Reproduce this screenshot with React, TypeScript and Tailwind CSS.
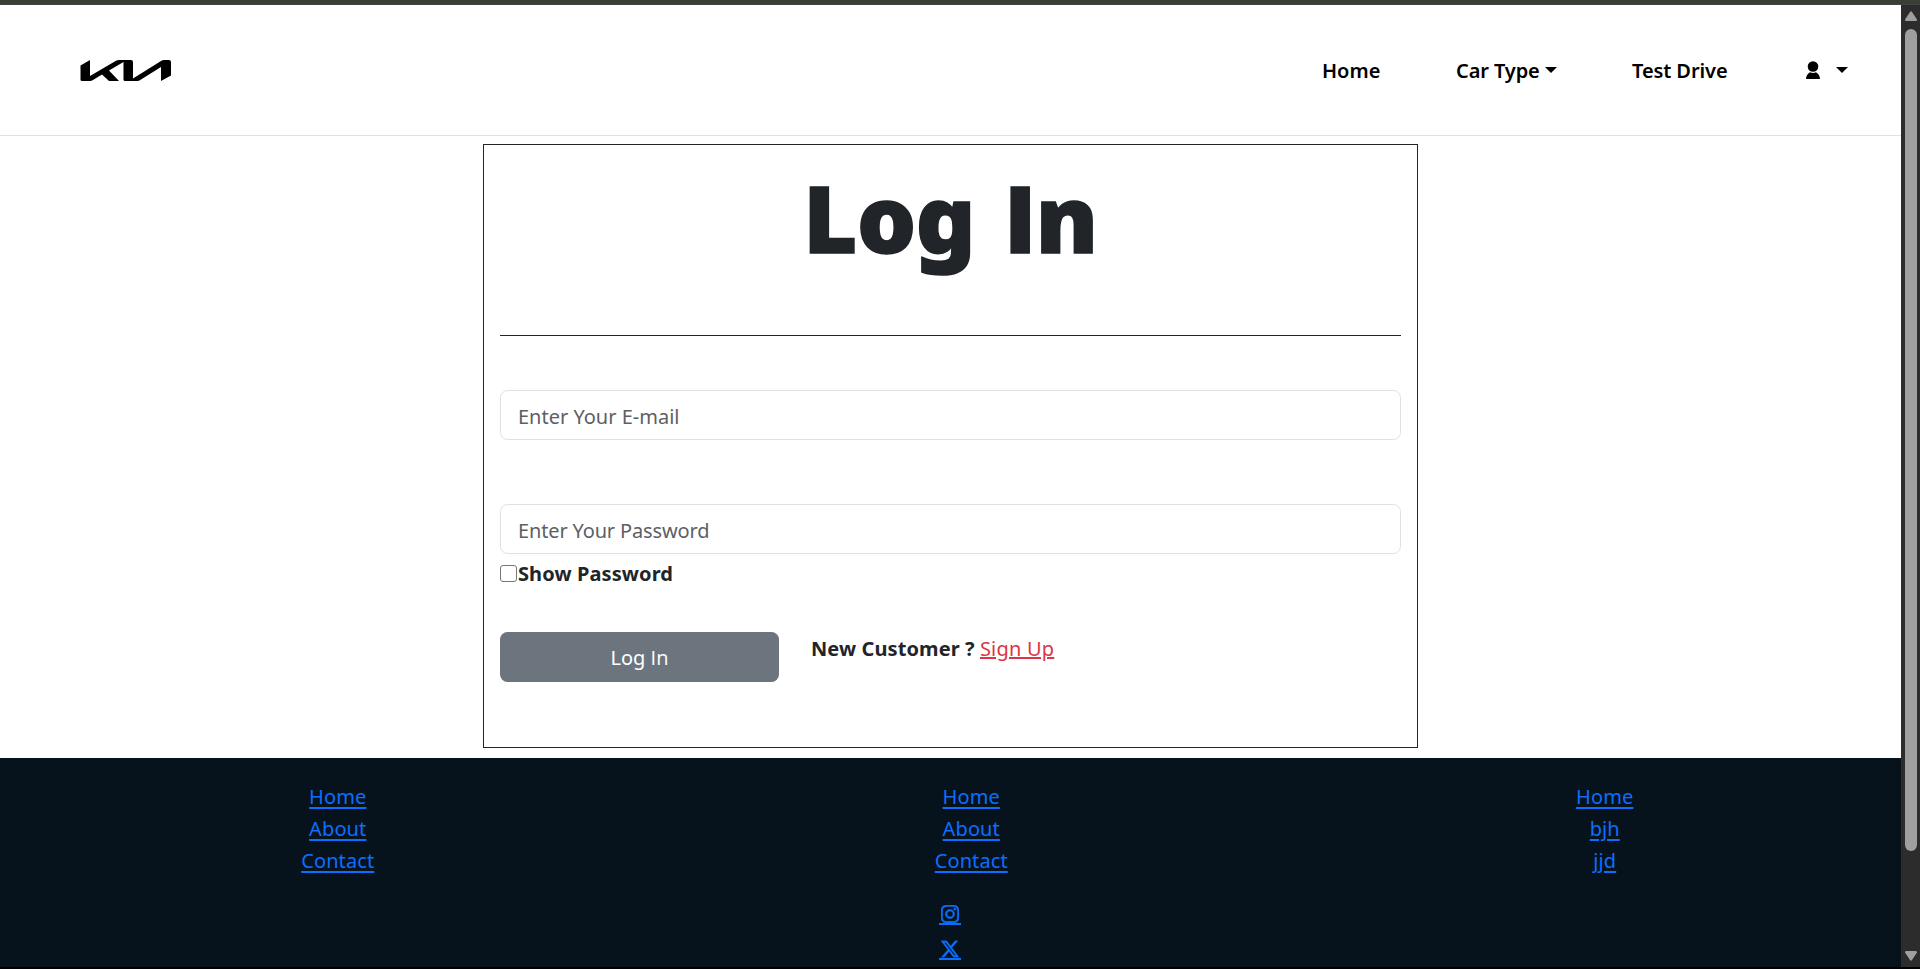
import { BsInstagram, BsTwitterX } from 'react-icons/bs';

function Caret({ className = '' }: { className?: string }) {
  return (
    <svg className={className} width="12" height="6" viewBox="0 0 12 6">
      <path d="M0 0h12L6 6z" fill="#000" />
    </svg>
  );
}

const columns = [
  ['Home', 'About', 'Contact'],
  ['Home', 'About', 'Contact'],
  ['Home', 'bjh', 'jjd'],
];

export default function App() {
  return (
    <div className="flex h-[969px] w-[1920px] flex-col overflow-hidden bg-black font-['Noto_Sans','Open_Sans',sans-serif] text-[20px] text-[#212529]">
      <div className="h-[5px] shrink-0 border-b border-[#444444] bg-[#3a3f36]" />
      <div className="flex h-[962px] shrink-0">
        <div className="flex w-[1901px] flex-col bg-white">
          <header className="flex h-[131px] shrink-0 items-center border-b border-[#dee2e6] pl-20 text-black">
            <svg width="91" height="21" viewBox="0 0 91 21" className="shrink-0">
              <path d="M0.5 5.500L10 0V16L36 .8Q37.500 0 39 0H51Q53 0 53 2V18.500L81 1Q82.500 0 84 0H89Q91 0 91 2V15.500L81 21V7L61 19.500Q59 21 57 21H45Q43.500 21 43.500 19.500V2L29 10.500L39 21H29L22 14.500L13 20Q11.500 21 10 21H2Q.5 21 .5 19.500Z" />
            </svg>
            <nav className="ml-[1151px] flex items-center font-semibold">
              <a className="w-[134px] pt-px">Home</a>
              <a className="flex w-[176px] items-center tracking-[-0.1px]">
                <span className="pt-px">Car Type</span>
                <Caret className="ml-[5px]" />
              </a>
              <a className="w-[174px] pt-px tracking-[-0.1px]">Test Drive</a>
              <svg width="14" height="18" viewBox="0 0 14 18">
                <circle cx="7" cy="5.500" r="5.300" />
                <path d="M0 18Q.3 13.500 4 11.300Q7 12.800 10 11.300Q13.700 13.500 14 18Z" />
              </svg>
              <Caret className="ml-4" />
            </nav>
          </header>
          <main className="flex h-[622px] shrink-0 justify-center pt-2">
            <div className="h-[604px] w-[935px] border border-[#212529] px-4">
              <h1 className="flex h-[191px] justify-center gap-[29px] border-b border-[#212529] pt-[7px] text-[93px] leading-[130px] font-black tracking-[-0.5px] [-webkit-text-stroke:1.5px_#212529]">
                <span>Log</span>
                <span className="font-['Open_Sans',sans-serif] font-extrabold">In</span>
              </h1>
              <input
                placeholder="Enter Your E-mail"
                className="mt-[54px] block h-[50px] w-full rounded-[7.5px] border border-[#dee2e6] px-[17px] pt-[3px] placeholder:text-[#5c6065]"
              />
              <input
                placeholder="Enter Your Password"
                className="mt-16 block h-[50px] w-full rounded-[7.5px] border border-[#dee2e6] px-[17px] pt-[3px] tracking-[-0.15px] placeholder:text-[#5c6065]"
              />
              <label className="mt-[4px] flex h-[30px] items-center font-bold">
                <span className="mr-[1px] h-[17px] w-[17px] rounded-[3px] border border-[#767676]" />
                <span className="pt-px tracking-[0.1px]">Show Password</span>
              </label>
              <div className="mt-[44px] flex">
                <button className="h-[50px] w-[279px] rounded-[7.5px] bg-[#6c757d] pt-[2px] text-white">
                  Log <span className="font-['Open_Sans',sans-serif]">In</span>
                </button>
                <p className="ml-[32px] pt-[1px] leading-[32px]">
                  <b className="tracking-[0.1px]">New Customer ?</b>{' '}
                  <a className="tracking-[0.2px] text-[#dc3545] underline decoration-2">Sign Up</a>
                </p>
              </div>
            </div>
          </main>
          <footer className="h-[209px] bg-[#06131d] text-[#0d6efd]">
            <div className="flex pt-[23px] pl-[21px]">
              {columns.map((links, i) => (
                <ul key={i} className="w-[633.5px] shrink-0 text-center leading-[32px]">
                  {links.map((l) => (
                    <li key={l}>
                      <a className="tracking-[0.1px] underline decoration-2 underline-offset-[3px]">{l}</a>
                    </li>
                  ))}
                </ul>
              ))}
            </div>
            <div className="mt-7 flex flex-col items-center gap-[15px] pr-px">
              <a className="flex h-[20px] w-[22px] justify-center border-b-2 border-[#0d6efd]">
                <BsInstagram className="h-[18px] w-[18px]" strokeWidth={0.4} />
              </a>
              <a className="flex h-[20px] w-[22px] justify-center border-b-2 border-[#0d6efd]">
                <BsTwitterX className="h-[18px] w-[18px]" strokeWidth={0.3} />
              </a>
            </div>
          </footer>
        </div>
        <aside className="flex w-[19px] flex-col items-center bg-[#2c2c2c]">
          <svg className="mt-[6px] shrink-0" width="12" height="10" viewBox="0 0 12 10" fill="#9f9f9f">
            <path d="M5 1Q6 -.5 7 1L12 8.500Q12 10 11 10H1Q0 10 0 8.500Z" />
          </svg>
          <div className="mt-2 h-[822px] w-3 rounded-full bg-[#9f9f9f]" />
          <svg className="mt-[100px] shrink-0" width="12" height="10" viewBox="0 0 12 10" fill="#9f9f9f">
            <path d="M5 9Q6 10.500 7 9L12 1.500Q12 0 11 0H1Q0 0 0 1.500Z" />
          </svg>
        </aside>
      </div>
    </div>
  );
}
